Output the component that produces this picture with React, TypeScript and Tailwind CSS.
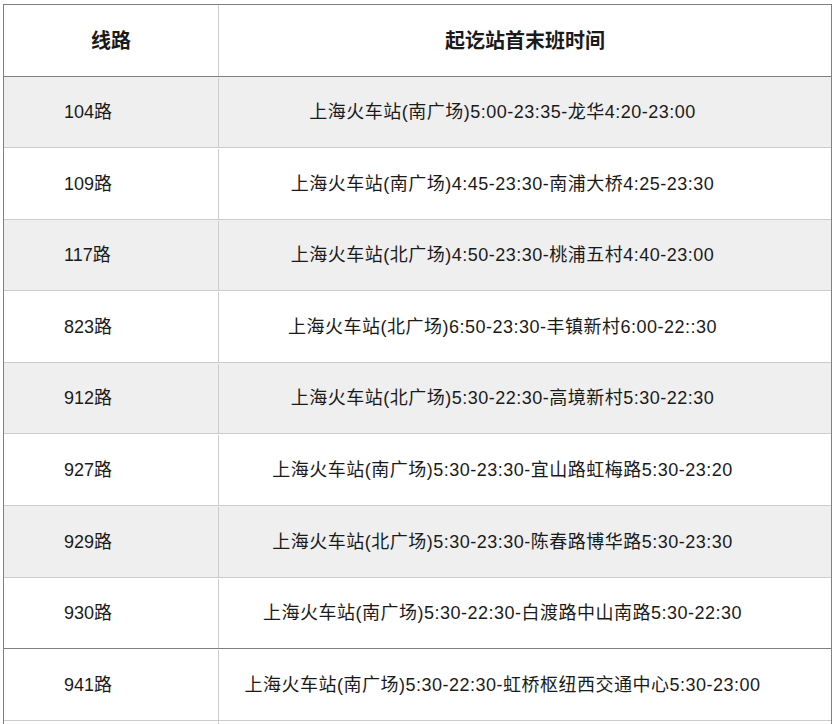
const rows = [
  { line: '104路', info: '上海火车站(南广场)5:00-23:35-龙华4:20-23:00', h: 'h-[71px]', bg: 'bg-[#efefef]' },
  { line: '109路', info: '上海火车站(南广场)4:45-23:30-南浦大桥4:25-23:30', h: 'h-[72px]', bg: 'bg-white' },
  { line: '117路', info: '上海火车站(北广场)4:50-23:30-桃浦五村4:40-23:00', h: 'h-[71px]', bg: 'bg-[#efefef]' },
  { line: '823路', info: '上海火车站(北广场)6:50-23:30-丰镇新村6:00-22::30', h: 'h-[72px]', bg: 'bg-white' },
  { line: '912路', info: '上海火车站(北广场)5:30-22:30-高境新村5:30-22:30', h: 'h-[71px]', bg: 'bg-[#efefef]' },
  { line: '927路', info: '上海火车站(南广场)5:30-23:30-宜山路虹梅路5:30-23:20', h: 'h-[72px]', bg: 'bg-white' },
  { line: '929路', info: '上海火车站(北广场)5:30-23:30-陈春路博华路5:30-23:30', h: 'h-[72px]', bg: 'bg-[#efefef]' },
  { line: '930路', info: '上海火车站(南广场)5:30-22:30-白渡路中山南路5:30-22:30', h: 'h-[71px]', bg: 'bg-white' },
  { line: '941路', info: '上海火车站(南广场)5:30-22:30-虹桥枢纽西交通中心5:30-23:00', h: 'h-[72px]', bg: 'bg-white' },
];

export default function App() {
  return (
    <div
      className="min-h-[724px] bg-white text-[#1a1a1a]"
      style={{ fontFamily: '"Liberation Sans", "Noto Sans CJK SC", sans-serif' }}
    >
      <div className="ml-[3px] pt-[4px] w-[829px]">
        <div className="border-l border-r border-t border-[#808080]">
          {/* Header */}
          <div className="flex h-[72px] border-b border-[#808080] text-[20px] font-bold">
            <div className="w-[215px] shrink-0 flex items-center justify-center border-r border-[#cccccc]">
              线路
            </div>
            <div className="flex-1 flex items-center justify-center">起讫站首末班时间</div>
          </div>
          {/* Rows */}
          {rows.map((r, i) => (
            <div
              key={i}
              className={`flex ${r.h} ${r.bg} border-b ${i === 7 ? 'border-[#808080]' : 'border-[#cccccc]'} text-[18px] pt-px`}
            >
              <div className="w-[215px] shrink-0 flex items-center pl-[60px] border-r border-[#cccccc]">
                {r.line}
              </div>
              <div className="flex-1 flex items-center justify-center pr-[45px] whitespace-nowrap tracking-[0.5px]">
                {r.info}
              </div>
            </div>
          ))}
          <div className="flex h-[10px] bg-white">
            <div className="w-[215px] shrink-0 border-r border-[#cccccc]" />
            <div className="flex-1" />
          </div>
        </div>
      </div>
    </div>
  );
}
